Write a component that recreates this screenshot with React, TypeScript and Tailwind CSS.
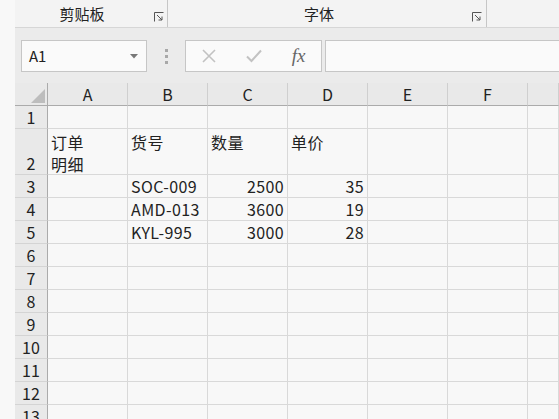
import React from "react";

const COLS = ["A", "B", "C", "D", "E", "F", ""];

type Row = { n: number; h: string; cells: (React.ReactNode | null)[] };

const rows: Row[] = [
  { n: 1, h: "h-[23px]", cells: [] },
  {
    n: 2,
    h: "h-[46px]",
    cells: [
      <span className="leading-[22px]">订单<br />明细</span>,
      <span className="leading-[22px]">货号</span>,
      <span className="leading-[22px]">数量</span>,
      <span className="leading-[22px]">单价</span>,
    ],
  },
  { n: 3, h: "h-[23px]", cells: [null, "SOC-009", 2500, 35] },
  { n: 4, h: "h-[23px]", cells: [null, "AMD-013", 3600, 19] },
  { n: 5, h: "h-[23px]", cells: [null, "KYL-995", 3000, 28] },
  ...Array.from({ length: 8 }, (_, i) => ({ n: i + 6, h: "h-[23px]", cells: [] })),
];

const font = { fontFamily: '"Noto Sans CJK SC", "Liberation Sans", sans-serif' };

function Launcher() {
  return (
    <svg width="10" height="10" viewBox="0 0 10 10" className="text-[#555]">
      <path d="M0.5 9.5V0.5H9.5" fill="none" stroke="currentColor" />
      <path d="M3 3L8 8M8 4.5V8H4.5" fill="none" stroke="currentColor" />
    </svg>
  );
}

export default function App() {
  return (
    <div className="w-[559px] h-[419px] overflow-hidden bg-[#f8f8f8] flex text-[#222]" style={font}>
      <div className="w-[15px] shrink-0 bg-[#f8f8f8]" />
      <div className="flex-1 flex flex-col min-w-0">
        {/* ribbon group labels */}
        <div className="h-[28px] shrink-0 bg-[#f3f3f3] border-b border-[#d6d6d6] flex">
          <div className="w-[153px] relative flex items-center justify-center text-[15px] pt-[1px] border-r border-[#c6c6c6]">
            <span className="-ml-[18px]">剪贴板</span>
            <span className="absolute right-[3px] top-[12px] flex"><Launcher /></span>
          </div>
          <div className="w-[319px] relative flex items-center justify-center text-[15px] pt-[1px] border-r border-[#c6c6c6]">
            <span className="-ml-[16px]">字体</span>
            <span className="absolute right-[4px] top-[12px] flex"><Launcher /></span>
          </div>
          <div className="flex-1" />
        </div>

        {/* formula bar */}
        <div className="h-[55px] shrink-0 bg-[#ebebeb] flex items-start pt-[12px]">
          <div className="ml-[6px] w-[126px] h-[32px] bg-[#fafafa] border border-[#c6c6c6] flex items-center justify-between pl-[7px] pr-[8px]">
            <span className="text-[15px]">A1</span>
            <svg width="8" height="5" viewBox="0 0 8 5"><path d="M0 0H8L4 4.5Z" fill="#777" /></svg>
          </div>
          <div className="w-[38px] h-[32px] flex flex-col items-center justify-center gap-[3px]">
            <span className="w-[3px] h-[3px] bg-[#a8a8a8]" />
            <span className="w-[3px] h-[3px] bg-[#a8a8a8]" />
            <span className="w-[3px] h-[3px] bg-[#a8a8a8]" />
          </div>
          <div className="w-[137px] h-[32px] bg-[#fafafa] border border-[#c6c6c6] flex items-center">
            <span className="w-[45px] flex justify-center">
              <svg width="16" height="16" viewBox="0 0 16 16"><path d="M2 2L14 14M14 2L2 14" stroke="#c2c2c2" strokeWidth="1.6" /></svg>
            </span>
            <span className="w-[45px] flex justify-center">
              <svg width="18" height="16" viewBox="0 0 18 16"><path d="M2 8.5L6.5 13L16 2.5" fill="none" stroke="#c2c2c2" strokeWidth="2" /></svg>
            </span>
            <span className="w-[45px] flex justify-center italic text-[19px] text-[#666]" style={{ fontFamily: '"Liberation Serif", serif' }}>
              fx
            </span>
          </div>
          <div className="ml-[3px] flex-1 h-[32px] bg-[#fafafa] border border-[#c6c6c6] border-r-0" />
        </div>

        {/* grid */}
        <div className="grid grid-cols-[33px_80px_80px_80px_80px_80px_80px_1fr] text-[16px]">
          <div className="h-[23px] bg-[#e9e9e9] border-r border-b border-[#ababab] relative">
            <svg width="14" height="14" viewBox="0 0 14 14" className="absolute right-[2px] bottom-[2px]">
              <path d="M14 0V14H0Z" fill="#bdbdbd" />
            </svg>
          </div>
          {COLS.map((c, i) => (
            <div
              key={i}
              className="h-[23px] bg-[#e9e9e9] border-b border-[#ababab] border-r border-r-[#cfcfcf] flex items-center justify-center"
            >
              {c}
            </div>
          ))}

          {rows.map((r) => (
            <React.Fragment key={r.n}>
              <div className={`${r.h} bg-[#e9e9e9] border-r border-[#ababab] border-b border-b-[#d4d4d4] flex items-end justify-center pb-[1px] leading-[20px]`}>
                {r.n}
              </div>
              {COLS.map((_, ci) => {
                const v = r.cells[ci];
                const isNum = typeof v === "number";
                return (
                  <div
                    key={ci}
                    className={`${r.h} border-r border-b border-[#d9d9d9] px-[3px] tracking-[0.4px] flex ${
                      r.n === 2 ? "items-start pt-[2px]" : "items-center"
                    } ${isNum ? "justify-end" : "justify-start"} whitespace-nowrap overflow-visible`}
                  >
                    {v}
                  </div>
                );
              })}
            </React.Fragment>
          ))}
        </div>
      </div>
    </div>
  );
}
